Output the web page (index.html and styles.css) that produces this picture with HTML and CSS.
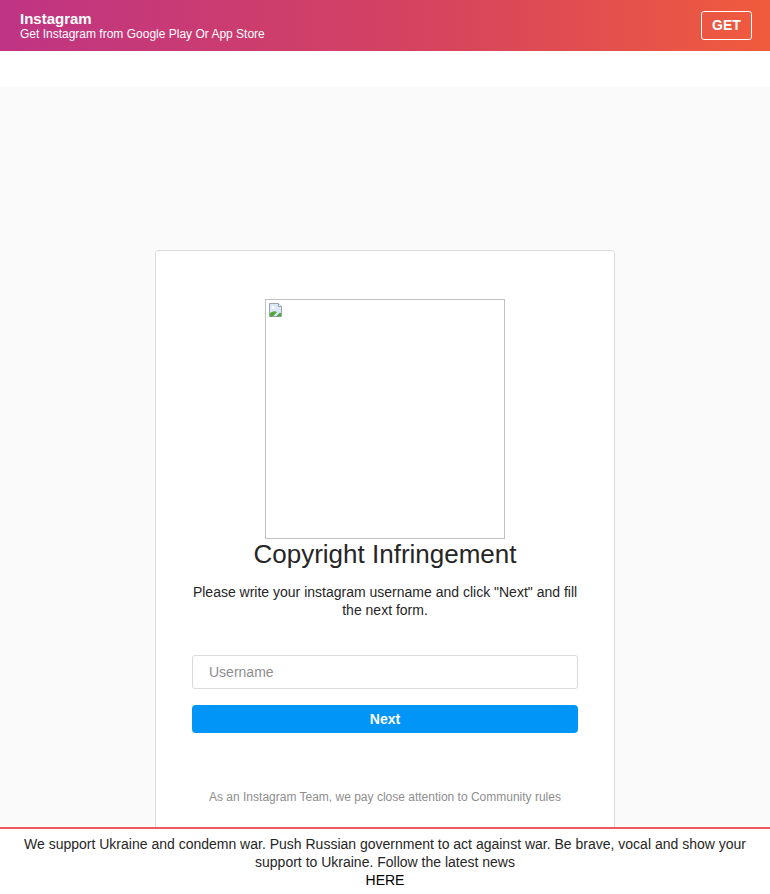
FILE: index.html
```html
<!DOCTYPE html>
<html lang="en">
<head>
<meta charset="utf-8">
<title>Instagram</title>
<link rel="stylesheet" href="styles.css">
</head>
<body>
<header class="topbar">
  <div class="topbar-text">
    <div class="topbar-title">Instagram</div>
    <div class="topbar-sub">Get Instagram from Google Play Or App Store</div>
  </div>
  <a class="get-btn" href="#">GET</a>
</header>
<div class="spacer"></div>
<main class="main">
  <section class="card">
    <div class="broken-img">
      <svg class="broken-icon" width="16" height="16" viewBox="0 0 16 16">
        <path d="M1.5 1.5h9l3 3v10h-12z" fill="#dbe7f7" stroke="#9aa3ad"/>
        <path d="M10.5 1.5v3h3" fill="#fff" stroke="#9aa3ad"/>
        <path d="M2 14.5 L2 11 Q6 8 9 10 L5 14.5z" fill="#4fa83d"/>
        <path d="M8 14.5 L11.5 11 L13 11 L13 14.5z" fill="#4fa83d"/>
        <circle cx="5" cy="5.5" r="1.6" fill="#fff"/>
      </svg>
    </div>
    <h1 class="title">Copyright Infringement</h1>
    <p class="desc">Please write your instagram username and click "Next" and fill the next form.</p>
    <form class="form">
      <input class="input" type="text" placeholder="Username">
      <button class="next-btn" type="button">Next</button>
    </form>
    <p class="note">As an Instagram Team, we pay close attention to Community rules</p>
  </section>
</main>
<div class="ukraine">
  <p class="ukraine-text">We support Ukraine and condemn war. Push Russian government to act against war. Be brave, vocal and show your support to Ukraine. Follow the latest news</p>
  <a class="ukraine-link" href="#">HERE</a>
</div>
</body>
</html>
```
FILE: styles.css
```css
* { box-sizing: border-box; }
html, body { margin: 0; padding: 0; }
body {
  font-family: "Liberation Sans", Arial, sans-serif;
  background: #fafafa;
  color: #262626;
  min-height: 100vh;
}
.topbar {
  height: 51px;
  background: linear-gradient(90deg, #bf3484 0%, #d5435f 55%, #f05b3d 100%);
  display: flex;
  align-items: center;
  justify-content: space-between;
  padding: 0 18px 0 20px;
  color: #fff;
}
.topbar-title {
  font-weight: bold;
  font-size: 15px;
  line-height: 17px;
}
.topbar-sub {
  font-size: 12px;
  line-height: 15px;
  margin-top: 0;
}
.get-btn {
  color: #fff;
  text-decoration: none;
  font-weight: bold;
  font-size: 14px;
  border: 1px solid #fff;
  border-radius: 3px;
  width: 51px;
  height: 29px;
  display: flex;
  align-items: center;
  justify-content: center;
  margin-top: -1px;
}
.spacer { height: 36px; background: #fff; }
.main {
  display: flex;
  justify-content: center;
  padding-top: 163px;
  padding-bottom: 80px;
}
.card {
  width: 460px;
  background: #fff;
  border: 1px solid #dbdbdb;
  border-radius: 3px;
  padding: 48px 36px 40px;
  display: flex;
  flex-direction: column;
  align-items: center;
}
.broken-img {
  width: 240px;
  height: 240px;
  border: 1px solid #c0c0c0;
  padding: 2px;
}
.broken-icon { display: block; }
.title {
  margin: 0;
  font-size: 26px;
  font-weight: normal;
  line-height: 30px;
  color: #262626;
}
.desc {
  margin: 14px 0 0;
  font-size: 14px;
  line-height: 18px;
  text-align: center;
  color: #262626;
}
.form {
  width: 386px;
  margin-top: 36px;
  display: flex;
  flex-direction: column;
  gap: 16px;
}
.input {
  height: 34px;
  width: 100%;
  border: 1px solid #dbdbdb;
  border-radius: 3px;
  padding: 0 16px;
  font-family: inherit;
  font-size: 14px;
  color: #262626;
  background: #fff;
}
.input::placeholder { color: #8e8e8e; }
.next-btn {
  height: 28px;
  width: 100%;
  border: 0;
  border-radius: 4px;
  background: #0095f6;
  color: #fff;
  font-family: inherit;
  font-weight: bold;
  font-size: 14px;
}
.note {
  margin: 57px 0 0;
  font-size: 12px;
  line-height: 14px;
  color: #8e8e8e;
  text-align: center;
}
.ukraine {
  position: fixed;
  left: 0;
  right: 0;
  bottom: 0;
  background: #fff;
  border-top: 2px solid #f0585f;
  text-align: center;
  padding: 6px 12px 5px;
  font-size: 14px;
  line-height: 18px;
  color: #262626;
}
.ukraine-text { margin: 0; }
.ukraine-link {
  color: #000;
  text-decoration: none;
  display: block;
}
```
